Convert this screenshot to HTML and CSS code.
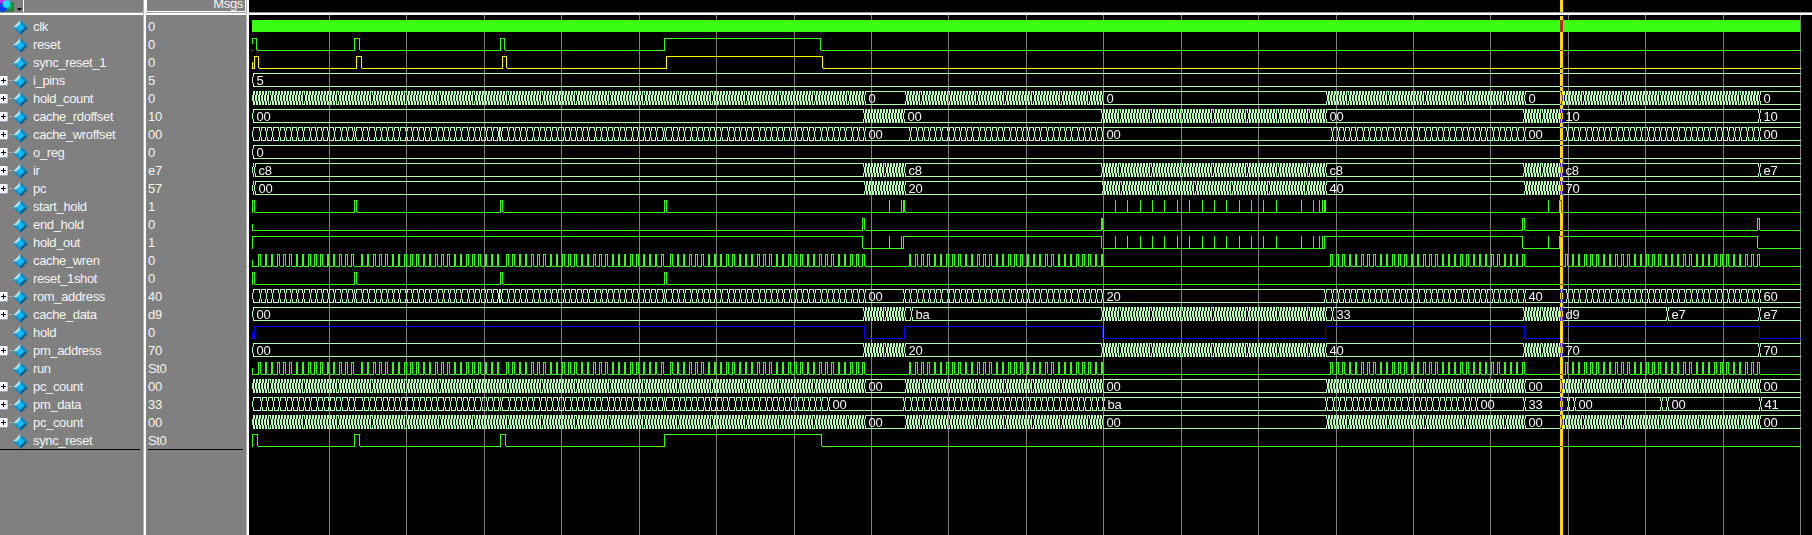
FILE: index.html
```
<!DOCTYPE html>
<html lang="en">
<head>
<meta charset="utf-8">
<title>Wave</title>
<link rel="stylesheet" href="styles.css">
</head>
<body>
<svg class="defs" width="0" height="0">
  <symbol id="gem" viewBox="0 0 15 15">
    <path d="M7.500 0L0 7.500L4 7.500L7.500 4z" fill="#a4e4f4"/>
    <path d="M7.500 0L15 7.500L11 7.500L7.500 4z" fill="#1487bd"/>
    <path d="M0 7.500L7.500 15L7.500 11L4 7.500z" fill="#168fd0"/>
    <path d="M15 7.500L7.500 15L7.500 11L11 7.500z" fill="#075c86"/>
    <path d="M7.500 3.500L11.500 7.500L7.500 11.500L3.500 7.500z" fill="#06bdfa"/>
  </symbol>
</svg>
<main class="wave-window">
  <section class="pane names">
    <header class="head">
      <svg class="logo" width="23" height="12" viewBox="0 0 23 12">
        <rect x="0" y="0" width="7" height="4" fill="#c030e8"/>
        <rect x="5" y="3" width="8" height="8" fill="#20a040" stroke="#106828"/>
        <circle cx="2.500" cy="7.500" r="4.500" fill="#0040f0"/>
        <circle cx="6.500" cy="4" r="3.800" fill="#20e0f8"/>
        <path d="M17 8h5l-2.500 3z" fill="#000"/>
      </svg>
    </header>
    <div class="rows" id="names"></div>
  </section>
  <section class="pane values">
    <header class="head"><span class="msgs">Msgs</span></header>
    <div class="rows" id="values"></div>
  </section>
  <section class="waves">
    <div class="ruler"></div>
    <div class="plot" id="plot"></div>
    <div class="cursor top"></div>
    <div class="cursor main"></div>
  </section>
</main>
<script src="wave.js"></script>
</body>
</html>
```
FILE: styles.css
```
body {
  margin: 0;
  overflow: hidden;
  background: #000;
  font: 13px/18px "Liberation Sans", Arial, sans-serif;
  letter-spacing: -0.35px;
  color: #f4f4f4;
}
.defs { position: absolute; }
.wave-window {
  display: flex;
  width: 1812px;
  height: 535px;
}
.pane {
  box-sizing: border-box;
  flex: none;
  background: #808080;
  border-right: 2px solid #fff;
  box-shadow: inset -1px 0 #b4b4b4;
}
.names { width: 146px; }
.values { width: 103px; }
.head {
  box-sizing: border-box;
  height: 15px;
  margin-right: 1px;
  border-bottom: 2px solid #fff;
  box-shadow: inset 0 -1px #a0a0a0;
}
.logo {
  display: block;
  border-right: 1px solid #fff;
}
.values .head { display: flex; }
.msgs {
  box-sizing: border-box;
  width: 100px;
  height: 12px;
  padding-right: 2px;
  border: 1px solid #fff;
  border-top: 0;
  line-height: 8px;
  text-align: right;
}
.rows {
  display: flex;
  flex-direction: column;
  padding-top: 3px;
  height: 431px;
}
.names .rows {
  width: 140px;
  border-bottom: 1px solid #000;
}
.values .rows {
  width: 95px;
  margin-left: 2px;
  border-bottom: 1px solid #000;
}
.row {
  display: flex;
  align-items: center;
  height: 18px;
  flex: none;
  white-space: nowrap;
}
.name { padding-left: 5px; }
.gem { width: 15px; height: 15px; flex: none; }
.expand {
  display: flex;
  flex: none;
  width: 13px;
}
.waves {
  position: relative;
  flex: 1;
  overflow: hidden;
  background: #000;
  isolation: isolate;
}
.ruler {
  height: 12px;
  border-bottom: 2px solid #fff;
  padding-bottom: 1px;
  background: linear-gradient(#000 12px, #999 12px);
}
.plot { height: 520px; }
.plot svg { display: block; }
.cursor {
  position: absolute;
  left: 1311px;
  width: 3px;
  background: #ffd800;
  mix-blend-mode: difference;
}
.cursor.top { top: 0; height: 12px; }
.cursor.main { top: 16px; bottom: 0; }
```
FILE: wave.js
```
const ORIGIN = 252, CLOCK = 3.0971, END = 1800, LEFT = 249, TOP = 15;

const px = t => Math.floor(ORIGIN + t * CLOCK);

/* evenly spaced bus changes between two columns, both included */
function spread(a, b, step) {
  const n = Math.max(1, Math.round((b - a) / step));
  const out = [];
  for (let i = 0; i <= n; i++) out.push(Math.floor(a + 0.500 + i * (b - a) / n));
  return out;
}
const fast = (a, b) => spread(a, b, CLOCK);
function ticks(t, last) {
  const out = [];
  for (; t <= last; t += 2) out.push(px(t));
  return out;
}

const bursts = [[2.25, 32.25], [35.25, 79.25], [82.25, 132.25], [135.25, 197.25],
  [212.25, 274.25], [348.25, 410.25], [424.25, 486.25]];
const writes = [];
for (const [a, b] of bursts)
  for (let t = a; t <= b; t += 2) writes.push([px(t), px(t + 0.5)]);

const spikes = [889, 901, 1115, 1127, 1140, 1152, 1164, 1177, 1189, 1202, 1214, 1226,
  1239, 1251, 1263, 1276, 1301, 1313, 1319, 1322, 1548];
const spikePulses = spikes.map(x => [x, x]);
const shots = [[252, 254], [354, 356], [500, 502], [664, 666]];

const step = bursts.map(([a, b]) => ticks(a + 0.5, b + 0.5));
const slowFirst = [252, ...step[0], 355, ...step[1], 501, ...step[2], 665, ...step[3]];
const counter = [...fast(252, 864), ...fast(906, 1102), ...fast(1327, 1524), ...fast(1562, 1759)];
const addr = [252, ...fast(864, 904), ...fast(1102, 1325), ...fast(1524, 1561), 1759];

const signals = [
  { name: "clk", value: "0", solid: true },
  { name: "reset", value: "0", start: "high", pulses: [[252, 256], [354, 359], [500, 504], [664, 820]] },
  { name: "sync_reset_1", value: "0", color: "#ffff00", start: "low", pulses: [[254, 258], [356, 361], [502, 506], [666, 822]] },
  { name: "i_pins", value: "5", bus: [252], text: [[252, "5"]] },
  { name: "hold_count", value: "0", bus: counter, text: [[864, "0"], [1102, "0"], [1524, "0"], [1759, "0"]] },
  { name: "cache_rdoffset", value: "10", bus: [252, ...fast(864, 903), ...fast(1102, 1325), ...fast(1524, 1561), 1759],
    text: [[252, "00"], [903, "00"], [1325, "00"], [1561, "10"], [1759, "10"]] },
  { name: "cache_wroffset", value: "00", bus: [...slowFirst, ...step[4], ...step[5], ...step[6]],
    text: [[864, "00"], [1102, "00"], [1524, "00"], [1759, "00"]] },
  { name: "o_reg", value: "0", bus: [252], text: [[252, "0"]] },
  { name: "ir", value: "e7", bus: [254, ...addr], text: [[254, "c8"], [904, "c8"], [1325, "c8"], [1561, "c8"], [1759, "e7"]] },
  { name: "pc", value: "57", bus: [252, 254, ...fast(865, 904), ...fast(1103, 1325), ...fast(1525, 1561)],
    text: [[254, "00"], [904, "20"], [1325, "40"], [1561, "70"]] },
  { name: "start_hold", value: "1", pulses: [...shots, ...spikePulses, [903, 904], [1324, 1325], [1559, 1561]] },
  { name: "end_hold", value: "0", start: "low", pulses: [[862, 864], [1101, 1102], [1522, 1524], [1757, 1759]] },
  { name: "hold_out", value: "1", pulses: [[252, 862], [903, 1101], [1324, 1522], [1559, 1757], ...spikePulses] },
  { name: "cache_wren", value: "0", start: "low", pulses: writes },
  { name: "reset_1shot", value: "0", pulses: shots },
  { name: "rom_address", value: "40", bus: [...slowFirst, 904, ...step[4], 1325, ...step[5], 1561, ...step[6]],
    text: [[864, "00"], [1102, "20"], [1524, "40"], [1759, "60"]] },
  { name: "cache_data", value: "d9", bus: [...addr, 911, 1332, 1667],
    text: [[252, "00"], [911, "ba"], [1332, "33"], [1561, "d9"], [1667, "e7"], [1759, "e7"]] },
  { name: "hold", value: "0", color: "#0000ff", start: "low", pulses: [[254, 864], [904, 1102], [1325, 1524], [1561, 1759]] },
  { name: "pm_address", value: "70", bus: addr, text: [[252, "00"], [904, "20"], [1325, "40"], [1561, "70"], [1759, "70"]] },
  { name: "run", value: "St0", start: "low", pulses: writes },
  { name: "pc_count", value: "00", bus: counter, text: [[864, "00"], [1102, "00"], [1524, "00"], [1759, "00"]] },
  { name: "pm_data", value: "33", bus: [252, ...ticks(3, 33), ...ticks(36, 80), 501, ...ticks(83, 133), 665, ...ticks(136, 186),
      904, ...spread(911, 1103, 6.19), 1326, ...spread(1333, 1476, 6.19), 1524, 1561, 1568, 1574, 1661, 1667, 1760],
    text: [[828, "00"], [1103, "ba"], [1476, "00"], [1524, "33"], [1574, "00"], [1667, "00"], [1760, "41"]] },
  { name: "pc_count", value: "00", bus: counter, text: [[864, "00"], [1102, "00"], [1524, "00"], [1759, "00"]] },
  { name: "sync_reset", value: "St0", pulses: [[252, 257], [354, 359], [500, 505], [664, 821]] }
];

/* ---- drawing: every line is one pixel wide, built from column and row runs ---- */
const hline = (x1, x2, y) => x2 < x1 ? "" : `M${x1} ${y}H${x2 + 1}V${y + 1}H${x1}z`;
const vline = (x, y1, y2) => `M${x} ${y1}H${x + 1}V${y2 + 1}H${x}z`;

function drawBit(s, y) {
  const hi = y + 20, lo = y + 32;
  let d = "", x = ORIGIN;
  if (s.start === "low") d += vline(ORIGIN, hi + 6, lo - 1);
  const wide = s.pulses.filter(p => p[1] > p[0]).sort((a, b) => a[0] - b[0]);
  for (const [a, b] of wide) {
    d += hline(x, a, lo) + hline(a, b, hi);
    d += a === ORIGIN && s.start === "high" ? vline(a, hi, hi + 5) : vline(a, hi, lo - 1);
    d += vline(b, hi, lo - 1);
    x = b + 1;
  }
  d += hline(x, END, lo);
  for (const [a, b] of s.pulses) if (a === b) d += vline(a, hi, lo - 1);
  return d;
}

function drawBus(list, y) {
  const top = y + 19, bot = y + 32;
  const c = [...new Set(list)].sort((a, b) => a - b);
  let d = "";
  c.forEach((x, i) => {
    const next = i + 1 < c.length ? c[i + 1] - 1 : END;
    d += vline(x, top + 4, bot - 4);
    /* back-to-back changes leave a doubled centre stroke */
    if (next - x < 4 && next - x > 1) d += vline(x + 1, top + 4, bot - 4);
    d += vline(x + 1, top, top + 3) + vline(x + 1, bot - 3, bot);
    if (i) d += vline(x - 1, top, top + 3) + vline(x - 1, bot - 3, bot);
    d += hline(x + 1, next, top) + hline(x + 1, next, bot);
  });
  return d;
}

let art = "";
for (let k = 1; k <= 20; k++)
  art += `<path fill="#808080" d="${vline(Math.floor(252 + 77.43 * k), 15, 535)}"/>`;
signals.forEach((s, i) => {
  const y = i * 18;
  if (s.solid) art += `<path fill="#39ff14" d="M252 20H1800V32H252z"/>`;
  else if (s.bus) {
    art += `<path fill="#b4ffb4" d="${drawBus(s.bus, y)}"/>`;
    for (const [x, t] of s.text) art += `<text x="${x + 4.500}" y="${y + 31}">${t}</text>`;
  } else art += `<path fill="${s.color || "#39ff14"}" d="${drawBit(s, y)}"/>`;
});
document.getElementById("plot").innerHTML =
  `<svg width="1563" height="520" viewBox="${LEFT} ${TOP} 1563 520" fill="#f4f4f4"><g shape-rendering="crispEdges">${art}</g></svg>`;

const expander = `<svg width="13" height="10" viewBox="0 0 13 10">
  <rect x="-1" y="0" width="9" height="10" rx="1" fill="#98a4c4"/><rect x="-1" y="0" width="8.500" height="9" rx="1" fill="#f6f8ff"/>
  <path d="M1 4.500H6M3.500 2V7" stroke="#000"/><path d="M9 4.500H13" stroke="#d0d0d0" stroke-dasharray="1 1"/></svg>`;
document.getElementById("names").innerHTML = signals.map(s =>
  `<div class="row"><span class="expand">${s.bus ? expander : ""}</span><svg class="gem"><use href="#gem"/></svg><span class="name">${s.name}</span></div>`).join("");
document.getElementById("values").innerHTML = signals.map(s =>
  `<div class="row"><span>${s.value}</span></div>`).join("");
```
